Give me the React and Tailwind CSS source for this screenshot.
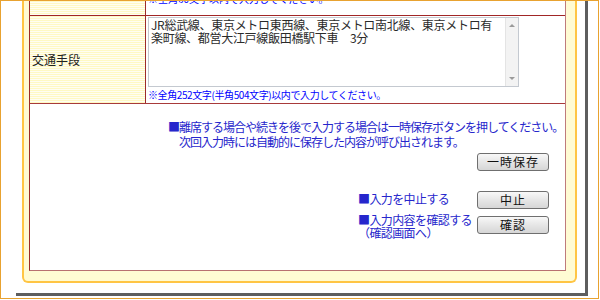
import React from 'react';

const jp = "font-['Noto_Sans_CJK_JP','Liberation_Sans',sans-serif]";
const stripes =
  'bg-[image:repeating-linear-gradient(180deg,#fff9c4_0px,#fff9c4_1px,#fffef2_1px,#fffef2_2px)]';

const Button = ({ children }) => (
  <button
    type="button"
    className="w-[72px] h-[18px] shrink-0 border border-[#6f6f6f] rounded-[3px] bg-[linear-gradient(#f8f8f8,#e6e6e6_50%,#d6d6d6)] text-[12px] leading-none text-[#111] tracking-[1px] flex items-center justify-center"
  >
    {children}
  </button>
);

// textarea drawn as a box so the wrap and the scrollbar match the shot
const FakeTextarea = () => (
  <div className="w-[371px] h-[70px] border border-[#c4c9d0] bg-white flex">
    <div className="flex-1 pl-[2px] text-[12px] leading-[13px] tracking-[-0.3px] text-[#2a2a2a] whitespace-pre">
      {'JR総武線、東京メトロ東西線、東京メトロ南北線、東京メトロ有\n楽町線、都営大江戸線飯田橋駅下車　3分'}
    </div>
    <div className="w-[13px] bg-[#f3f3f3] border-l border-[#e4e4e4] flex flex-col items-center justify-between py-[6px]">
      <div className="w-0 h-0 border-x-[3px] border-x-transparent border-b-[3px] border-b-[#9a9a9a]" />
      <div className="w-0 h-0 border-x-[3px] border-x-transparent border-t-[3px] border-t-[#9a9a9a]" />
    </div>
  </div>
);

export default function App() {
  return (
    <div className={`w-[600px] h-[300px] bg-white overflow-hidden ${jp}`}>
      <div className="w-[599px] h-[299px] border border-[#e8a230] bg-white overflow-hidden">
        {/* white sheet with drop shadow */}
        <div className="ml-[15px] w-[572px] h-[295px] border-r-[3px] border-b-[3px] border-[#5e5e5e] bg-white pl-[6px] pr-[8px]">
          {/* yellow panel */}
          <div className="w-[555px] h-[282px] border-x-2 border-b-2 border-[#ffc544] rounded-b-[6px] bg-[#fffbd3] pl-[5px] pr-[9px] pb-[10px] flex flex-col">
            {/* table */}
            <div className="flex-1 flex flex-col bg-white border-l border-[#9c2b2b] border-r border-b border-r-[#bf7b7b] border-b-[#b87070]">
              {/* previous row, cut off at the top */}
              <div className="h-[14px] flex overflow-hidden">
                <div className={`w-[115px] ${stripes}`} />
                <div className="flex-1 border-l border-[#9c2b2b] pl-[2px] overflow-hidden">
                  <p className="-mt-[8px] text-[length:10px] leading-[12px] text-[#0000ff] whitespace-nowrap">
                    ※全角60文字以内で入力してください。
                  </p>
                </div>
              </div>

              {/* transport row */}
              <div className="h-[88px] flex border-t border-[#a12626]">
                <div className={`w-[115px] ${stripes} flex items-center pl-[2px] text-[12px] text-[#222]`}>
                  交通手段
                </div>
                <div className="flex-1 border-l border-[#9c2b2b] pl-[2px] pt-[1px]">
                  <FakeTextarea />
                  <p className="mt-[2px] text-[length:10px] leading-[12px] tracking-[-0.4px] text-[#0000ff] whitespace-nowrap">
                    ※全角252文字(半角504文字)以内で入力してください。
                  </p>
                </div>
              </div>

              {/* actions */}
              <div className="flex-1 border-t border-[#a83a3a] text-[color:#2626cc] text-[12px]">
                <div className="pl-[138px] pt-[15px] leading-[15px] tracking-[-1px] whitespace-nowrap">
                  <p>■離席する場合や続きを後で入力する場合は一時保存ボタンを押してください。</p>
                  <p className="pl-[11px]">次回入力時には自動的に保存した内容が呼び出されます。</p>
                </div>
                <div className="flex justify-end pr-[16px] mt-[4px]">
                  <Button>一時保存</Button>
                </div>
                <div className="flex justify-end items-center pr-[16px] mt-[20px]">
                  <p className="w-[119px] -mt-[3px] tracking-[-0.6px] whitespace-nowrap leading-[13px]">■入力を中止する</p>
                  <Button>中止</Button>
                </div>
                <div className="flex justify-end items-start pr-[16px] mt-[4px]">
                  <div className="w-[119px] tracking-[-0.6px] whitespace-nowrap leading-[13px]">
                    <p>■入力内容を確認する</p>
                    <p>（確認画面へ）</p>
                  </div>
                  <div className="mt-[3px]">
                    <Button>確認</Button>
                  </div>
                </div>
              </div>
            </div>
          </div>
        </div>
      </div>
    </div>
  );
}
